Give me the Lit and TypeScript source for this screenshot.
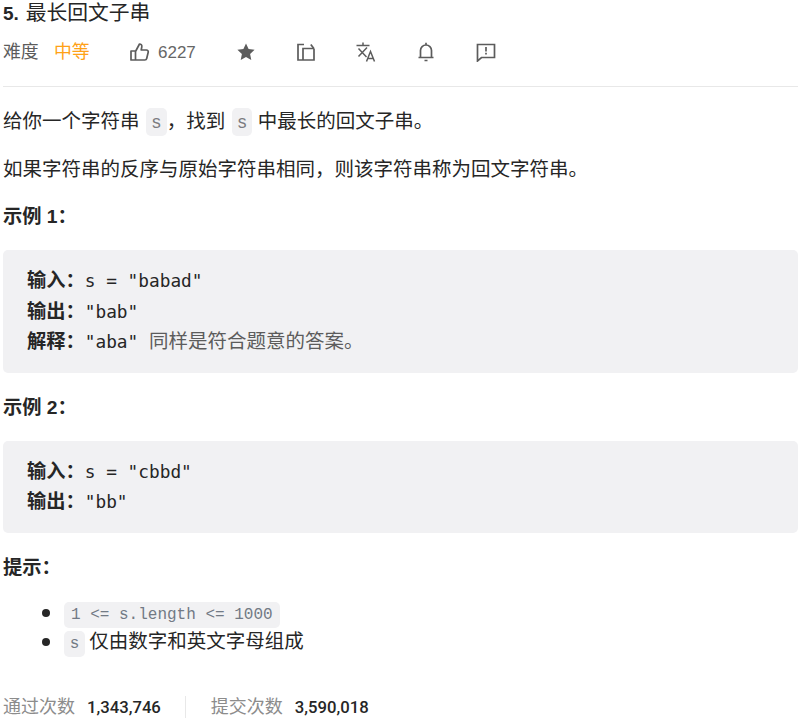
import { LitElement, html, css } from "lit";
import { customElement } from "lit/decorators.js";

@customElement("app-root")
export class AppRoot extends LitElement {
  static styles = css`
    :host {
      display: block;
      width: 808px;
      height: 718px;
      overflow: hidden;
      box-sizing: border-box;
      padding: 0 10px 0 3px;
      font-family: "Liberation Sans", "Noto Sans CJK SC", sans-serif;
      color: #262626;
      font-size: 19.5px;
      line-height: 27px;
    }
    .title {
      font-size: 20.8px;
      line-height: 26px;
      height: 26px;
      font-weight: 400;
      margin: 0;
    }
    .title b { font-weight: 700; font-size: 19px; margin-right: 1px; }
    .meta {
      display: flex;
      align-items: center;
      height: 26px;
      margin-top: 13px;
      padding-bottom: 21px;
      border-bottom: 1px solid #e8e8e8;
      font-size: 17.875px;
      color: #5c5c5c;
    }
    .diff { width: 51px; }
    .hard { color: #ffa116; width: 76px; }
    .likes { display: flex; align-items: center; gap: 8px; width: 106px; color: #666; font-size: 17px; }
    .ic { width: 60px; display: flex; }
    svg { display: block; flex: none; }
    p { margin: 0; }
    .p1 { margin-top: 21px; }
    .p2 { margin-top: 20px; height: 27px; }
    .h { font-weight: 700; margin-top: 20px; font-size: 19.25px; }
    .h2 { margin-top: 21px; }
    .h3 { margin-top: 21px; }
    code {
      font-family: "Liberation Mono", monospace;
      background: #f1f1f3;
      color: #727a85;
      font-size: 16px;
      border-radius: 5px;
      padding: 4px 7px;
    }
    .s {
      font-family: "Liberation Sans", sans-serif;
      font-size: 17.6px;
      padding: 4px 6px;
      margin-left: 1px;
      color: #7b7b80;
    }
    .one { padding: 4px 5.7px; }
    .pre {
      margin-top: 20px;
      background: #f1f1f3;
      border-radius: 5px;
      padding: 14px 24px 17px;
      line-height: 30.6px;
      font-family: "DejaVu Sans Mono", monospace;
      color: #262626;
    }
    .l { display: block; white-space: pre; font-size: 17.8px; height: 30.6px; }
    .l b { font-family: "Noto Sans CJK SC", sans-serif; font-weight: 700; font-size: 19.25px; }
    .l i { font-style: normal; font-family: "Noto Sans CJK SC", sans-serif; font-size: 19.5px; color: #5c5c5c; }
    ul { margin: 15px 0 0; padding: 0 0 0 61px; line-height: 29px; list-style: none; }
    li { height: 29px; position: relative; font-family: "Noto Sans CJK SC", sans-serif; }
    li::before {
      content: "";
      position: absolute;
      left: -22px;
      top: 13px;
      width: 8px;
      height: 8px;
      border-radius: 50%;
      background: #262626;
    }
    .foot {
      display: flex;
      align-items: center;
      font-size: 18px;
      margin-top: 41px;
      height: 26px;
      color: #8c8c8c;
    }
    .n { color: #262626; font-weight: 500; margin-left: 12px; font-family: Roboto, sans-serif; font-size: 16.7px; }
    .sep { width: 1px; height: 24px; background: #e8e8e8; margin: 0 24.5px; }
  `;

  render() {
    return html`
      <h1 class="title"><b>5.</b> 最长回文子串</h1>
      <div class="meta">
        <span class="diff">难度</span>
        <span class="hard">中等</span>
        <span class="likes">
          <svg width="20" height="20" viewBox="0 0 20 20" fill="none" stroke="#5c5c5c" stroke-width="1.7" stroke-linejoin="round"><path d="M1 9h4.5v9H1zM5.5 9.5L9.5 2c1.6 0 2.6 1.2 2.3 2.8L11.2 8h5.3c1.2 0 2 1 1.7 2.2l-1.5 6.3c-.2.9-1 1.5-1.9 1.5H5.5"/></svg>
          6227
        </span>
        <span class="ic"><svg width="20" height="20" viewBox="0 0 20 20" fill="#5c5c5c"><path d="M10 1.5l2.6 5.6 6 .7-4.5 4.1 1.2 6L10 15l-5.3 2.9 1.2-6L1.4 7.8l6-.7z"/></svg></span>
        <span class="ic"><svg width="20" height="20" viewBox="0 0 20 20" fill="none" stroke="#5c5c5c" stroke-width="1.7"><path d="M8 2.5H2v15.5h16V6.5M7 18V6.5h11"/><path d="M14.8 2.5l3 4" /></svg></span>
        <span class="ic"><svg width="20" height="20" viewBox="0 0 20 20" fill="none" stroke="#5c5c5c" stroke-width="1.5"><path d="M.5 3.5h13M7 .5v3M2.5 6.5l8 8.5M11 5.5L2.5 14.5M10.5 19.5l4-10 4 10M12 16.5h5"/></svg></span>
        <span class="ic"><svg width="20" height="20" viewBox="0 0 20 20" fill="none" stroke="#5c5c5c" stroke-width="1.7"><path d="M2.5 15.5h15M4.5 15.5V8.5a5.5 5.5 0 0 1 11 0v7M8.5 18.5h3M10 .8v2.2"/></svg></span>
        <span class="ic"><svg width="20" height="20" viewBox="0 0 20 20" fill="none" stroke="#5c5c5c" stroke-width="1.7"><path d="M1.5 2.5h17v13H5.5l-4 3.5z"/><path d="M10 5v4.5M10 10.8v1.7"/></svg></span>
      </div>
      <p class="p1">给你一个字符串 <code class="s">s</code>，找到 <code class="s">s</code> 中最长的回文子串。</p>
      <p class="p2">如果字符串的反序与原始字符串相同，则该字符串称为回文字符串。</p>
      <p class="h">示例 1：</p>
      <div class="pre">
        <span class="l"><b>输入：</b>s = "babad"</span>
        <span class="l"><b>输出：</b>"bab"</span>
        <span class="l"><b>解释：</b>"aba" <i>同样是符合题意的答案。</i></span>
      </div>
      <p class="h h2">示例 2：</p>
      <div class="pre">
        <span class="l"><b>输入：</b>s = "cbbd"</span>
        <span class="l"><b>输出：</b>"bb"</span>
      </div>
      <p class="h h3">提示：</p>
      <ul>
        <li><code>1 &lt;= s.length &lt;= 1000</code></li>
        <li><code class="one">s</code> 仅由数字和英文字母组成</li>
      </ul>
      <div class="foot">
        <span>通过次数</span><span class="n">1,343,746</span>
        <span class="sep"></span>
        <span>提交次数</span><span class="n">3,590,018</span>
      </div>
    `;
  }
}
